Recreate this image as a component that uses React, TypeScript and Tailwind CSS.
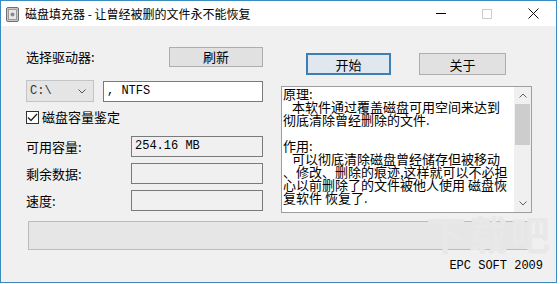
import React from 'react'

const cjk = { fontFamily: '"Noto Sans CJK SC", "Noto Sans", sans-serif' }
const mono = { fontFamily: '"Liberation Mono", "Noto Sans CJK SC", monospace' }

function DiskIcon() {
  return (
    <svg width="13" height="15" viewBox="0 0 13 15">
      <rect x="0.5" y="0.5" width="12" height="14" rx="1.5" fill="#c9c9c9" stroke="#6e6e6e" />
      <rect x="2.5" y="2.5" width="8" height="10" fill="#e8e8e8" stroke="#9a9a9a" />
      <circle cx="6.5" cy="7.5" r="2" fill="#8a8a8a" />
    </svg>
  )
}

function Field({ w, children, bg = 'bg-[#f0f0f0]' }: { w: string; children?: React.ReactNode; bg?: string }) {
  return (
    <div
      className={`${w} ${bg} h-[21px] border border-[#7a7a7a] px-[3px] text-[12px] leading-[19px] text-black whitespace-nowrap`}
      style={mono}
    >
      {children}
    </div>
  )
}

function Row({ label, children }: { label: string; children?: React.ReactNode }) {
  return (
    <div className="flex items-center justify-between">
      <span className="text-[13px] text-black" style={cjk}>
        {label}
      </span>
      {children}
    </div>
  )
}

const info: { text: string; indent?: boolean }[] = [
  { text: '原理:' },
  { text: '本软件通过覆盖磁盘可用空间来达到', indent: true },
  { text: '彻底清除曾经删除的文件.' },
  { text: '\u00a0' },
  { text: '作用:' },
  { text: '可以彻底清除磁盘曾经储存但被移动', indent: true },
  { text: '、修改、删除的痕迹,这样就可以不必担' },
  { text: '心以前删除了的文件被他人使用 磁盘恢' },
  { text: '复软件 恢复了.' },
]

export default function App() {
  return (
    <div className="w-[560px] h-[284px] bg-white">
      <div className="relative w-[557px] h-[283px] border border-[#3a8cc0] bg-[#f0f0f0] flex flex-col overflow-hidden">
        {/* title bar */}
        <div className="h-[25px] bg-white flex items-center">
          <div className="ml-[5px] mt-[1px]">
            <DiskIcon />
          </div>
          <span className="ml-[6px] text-[12px] text-black" style={cjk}>
            磁盘填充器 - 让曾经被删的文件永不能恢复
          </span>
          <div className="ml-auto flex items-center h-full">
            <div className="w-[46px] h-full flex items-center justify-center">
              <div className="w-[10px] h-[1px] bg-black" />
            </div>
            <div className="w-[46px] h-full flex items-center justify-center">
              <div className="w-[10px] h-[10px] border border-[#cccccc]" />
            </div>
            <div className="w-[46px] h-full flex items-center justify-center">
              <svg width="11" height="11" viewBox="0 0 11 11">
                <path d="M0.5 0.5 L10.5 10.5 M10.5 0.5 L0.5 10.5" stroke="#111" strokeWidth="1" />
              </svg>
            </div>
          </div>
        </div>

        {/* body */}
        <div className="flex items-start">
          <div className="ml-[25px] w-[237px] pt-[21px] flex flex-col">
            <Row label="选择驱动器:">
              <button
                className="w-[94px] h-[20px] bg-[#e1e1e1] border border-[#adadad] text-[13px] leading-[18px] text-black"
                style={cjk}
              >
                刷新
              </button>
            </Row>
            <div className="mt-[13px] flex items-center justify-between">
              <div className="w-[68px] h-[22px] bg-[#e5e5e5] border border-[#c4c4c4] flex items-center px-[3px]">
                <span className="text-[12px] text-[#333]" style={mono}>
                  C:\
                </span>
                <svg className="ml-auto mr-[4px]" width="8" height="5" viewBox="0 0 8 5">
                  <path d="M0.5 0.5 L4 4 L7.5 0.5" fill="none" stroke="#555" />
                </svg>
              </div>
              <Field w="w-[160px]" bg="bg-white">
                , NTFS
              </Field>
            </div>
            <div className="mt-[8px] flex items-center h-[14px]">
              <div className="w-[13px] h-[13px] border border-[#333] bg-white flex items-center justify-center">
                <svg width="11" height="9" viewBox="0 0 11 9">
                  <path d="M1 4.5 L4 7.5 L10 1" fill="none" stroke="#222" strokeWidth="1.3" />
                </svg>
              </div>
              <span className="ml-[3px] text-[13px] text-black" style={cjk}>
                磁盘容量鉴定
              </span>
            </div>
            <div className="mt-[12px] flex flex-col gap-[6px]">
              <Row label="可用容量:">
                <Field w="w-[132px]">254.16 MB</Field>
              </Row>
              <Row label="剩余数据:">
                <Field w="w-[132px]" />
              </Row>
              <Row label="速度:">
                <Field w="w-[132px]" />
              </Row>
            </div>
          </div>

          <div className="ml-[18px] w-[251px] pt-[27px] flex flex-col">
            <div className="flex items-center">
              <button
                className="ml-[25px] w-[85px] h-[22px] bg-[#e1e7ee] border-2 border-[#3d7fb4] text-[13px] leading-[17px] text-black"
                style={cjk}
              >
                开始
              </button>
              <button
                className="ml-[28px] w-[87px] h-[22px] bg-[#e1e1e1] border border-[#adadad] text-[13px] leading-[19px] text-black"
                style={cjk}
              >
                关于
              </button>
            </div>
            <div className="mt-[11px] h-[127px] border border-[#9e9e9e] bg-white flex">
              <div className="flex-1 pl-[1px] text-[13px] leading-[13px] text-black" style={cjk}>
                {info.map((l, i) => (
                  <div key={i} className={`whitespace-nowrap ${l.indent ? 'pl-[9px]' : ''}`}>
                    {l.text}
                  </div>
                ))}
              </div>
              <div className="w-[17px] bg-[#f0f0f0] flex flex-col items-center">
                <div className="h-[17px] flex items-center justify-center">
                  <svg width="8" height="5" viewBox="0 0 8 5">
                    <path d="M0.5 4.5 L4 1 L7.5 4.5" fill="none" stroke="#606060" />
                  </svg>
                </div>
                <div className="w-[15px] h-[41px] bg-[#cdcdcd]" />
                <div className="mt-auto h-[17px] flex items-center justify-center">
                  <svg width="8" height="5" viewBox="0 0 8 5">
                    <path d="M0.5 0.5 L4 4 L7.5 0.5" fill="none" stroke="#606060" />
                  </svg>
                </div>
              </div>
            </div>
          </div>
        </div>

        <div className="ml-[27px] mt-[8px] w-[502px] h-[29px] bg-[#e6e6e6] border border-[#bcbcbc]" />

        <div className="flex-1 flex items-center justify-end pr-[13px]">
          <span className="text-[12px] text-black" style={mono}>
            EPC SOFT 2009
          </span>
        </div>

        <span
          className="absolute right-[4px] top-[212px] text-[40px] leading-[40px] font-bold text-[#e8e8e8] tracking-[2px] pointer-events-none"
          style={cjk}
        >
          下载吧
        </span>
      </div>
    </div>
  )
}
